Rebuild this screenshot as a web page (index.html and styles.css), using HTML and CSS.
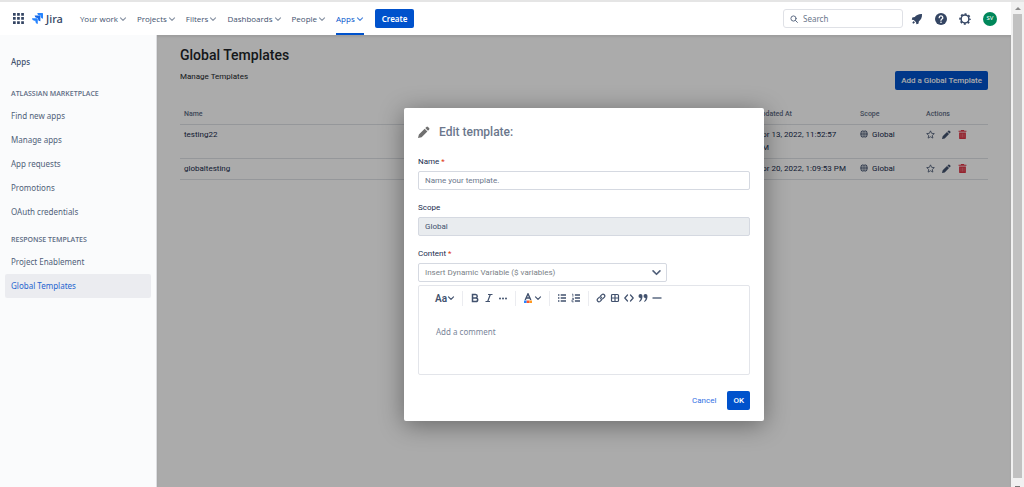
FILE: index.html
```html
<!DOCTYPE html>
<html lang="en">
<head>
<meta charset="utf-8">
<title>Global Templates - Jira</title>
<link rel="stylesheet" href="styles.css">
</head>
<body>
<svg class="defs" aria-hidden="true">
  <symbol id="chev" viewBox="0 0 8 8"><path d="M1.500 2.800 4 5.300l2.500-2.500" fill="none" stroke="currentColor" stroke-width="1.200" stroke-linecap="round" stroke-linejoin="round"/></symbol>
  <symbol id="pencil" viewBox="0 0 16 16"><path fill="currentColor" d="M11.200 1.300a1.500 1.500 0 0 1 2.100 0l1.500 1.500a1.500 1.500 0 0 1 0 2.100L13.300 6.400 9.700 2.800zM8.900 3.600l3.600 3.600-7.700 7.700L0 16l1.200-4.700z"/></symbol>
  <symbol id="star" viewBox="0 0 16 16"><path fill="none" stroke="currentColor" stroke-width="1.400" stroke-linejoin="round" d="m8 1.500 2 4.400 4.800.5-3.600 3.200 1 4.800L8 12l-4.200 2.400 1-4.800L1.200 6.400 6 5.900z"/></symbol>
  <symbol id="trash" viewBox="0 0 16 16"><path fill="currentColor" d="M5.500 0h5l.8 1.300H15v2H1v-2h3.700zM2 4.300h12V14.500a1.500 1.500 0 0 1-1.500 1.500h-9A1.500 1.500 0 0 1 2 14.500z"/><path d="M5.300 6.500v7M8 6.500v7M10.700 6.500v7" stroke="#fff" stroke-opacity=".45"/></symbol>
  <symbol id="globe" viewBox="0 0 16 16"><circle cx="8" cy="8" r="7.500" fill="currentColor"/><path d="M.5 5.500h15M.5 10.500h15M8 .5v15" stroke="#fff" stroke-width="1"/><ellipse cx="8" cy="8" rx="3.700" ry="7.500" fill="none" stroke="#fff"/></symbol>
</svg>
<div class="app">
  <div class="screen">
    <header class="topbar">
      <button class="icon-btn switcher" aria-label="App switcher"><svg viewBox="0 0 11 11" width="11" height="11" fill="#344563"><path d="M0 0h2.700v2.700H0zM4.100 0h2.700v2.700H4.100zM8.200 0h2.700v2.700H8.200zM0 4.100h2.700v2.700H0zM4.100 4.100h2.700v2.700H4.100zM8.200 4.100h2.700v2.700H8.200zM0 8.200h2.700v2.700H0zM4.100 8.200h2.700v2.700H4.100zM8.200 8.200h2.700v2.700H8.200z"/></svg></button>
      <a class="logo" href="#">
        <svg viewBox="0 0 24 24" width="11" height="11"><path fill="#2684ff" d="M23 0H11.500a5.200 5.200 0 0 0 5.200 5.200h2.100v2A5.200 5.200 0 0 0 24 12.400V1a1 1 0 0 0-1-1z"/><path fill="#1769e8" d="M17.300 5.700H5.800A5.200 5.200 0 0 0 11 10.900h2.100V13a5.200 5.200 0 0 0 5.200 5.200V6.700a1 1 0 0 0-1-1z"/><path fill="#2684ff" d="M11.600 11.500H0a5.200 5.200 0 0 0 5.200 5.200h2.200v2a5.200 5.200 0 0 0 5.200 5.200V12.500a1 1 0 0 0-1-1z"/></svg>
        <span>Jira</span>
      </a>
      <nav class="nav">
        <a href="#">Your work<svg class="chev"><use href="#chev"/></svg></a>
        <a href="#">Projects<svg class="chev"><use href="#chev"/></svg></a>
        <a href="#">Filters<svg class="chev"><use href="#chev"/></svg></a>
        <a href="#">Dashboards<svg class="chev"><use href="#chev"/></svg></a>
        <a href="#">People<svg class="chev"><use href="#chev"/></svg></a>
        <a class="current" href="#">Apps<svg class="chev"><use href="#chev"/></svg></a>
      </nav>
      <button class="primary create">Create</button>
      <div class="tools">
        <label class="search">
          <svg viewBox="0 0 8 8" width="8" height="8" fill="none" stroke="#5e6c84" stroke-linecap="round"><circle cx="3.500" cy="3.500" r="2.600"/><path d="m5.500 5.500 1.900 1.900"/></svg>
          <input type="text" placeholder="Search" aria-label="Search">
        </label>
        <button class="icon-btn" aria-label="Notifications"><svg viewBox="0 0 12 12" width="12" height="12" fill="#344563"><path d="M11 1C7.500.8 5.200 2.200 3.800 4L1.300 4.600.8 6.700l2 .3L5 9.300l.4 2 2-.6.5-2.500C9.900 6.800 11.200 4.500 11 1zM2.600 8 4 9.400l-1.700 1.300-1-.9z"/></svg></button>
        <button class="icon-btn" aria-label="Help"><svg viewBox="0 0 12 12" width="12" height="12"><circle cx="6" cy="6" r="6" fill="#344563"/><path d="M4.200 4.700a1.800 1.700 0 1 1 2.500 1.500c-.5.300-.7.500-.7 1.100" fill="none" stroke="#fff" stroke-width="1.300" stroke-linecap="round"/><circle cx="6" cy="9.200" r=".8" fill="#fff"/></svg></button>
        <button class="icon-btn" aria-label="Settings"><svg viewBox="0 0 12 12" width="12" height="12" fill="none" stroke="#344563"><circle cx="6" cy="6" r="3.900" stroke-width="1.500"/><circle cx="6" cy="6" r="5" stroke-width="1.600" stroke-dasharray="1.960 1.960" stroke-dashoffset=".980"/></svg></button>
        <button class="avatar" aria-label="Profile">SV</button>
      </div>
    </header>
    <div class="body">
      <aside class="sidebar">
        <p class="side-title">Apps</p>
        <h2>Atlassian Marketplace</h2>
        <a href="#">Find new apps</a>
        <a href="#">Manage apps</a>
        <a href="#">App requests</a>
        <a href="#">Promotions</a>
        <a href="#">OAuth credentials</a>
        <h2>Response Templates</h2>
        <a href="#">Project Enablement</a>
        <a class="current" href="#">Global Templates</a>
      </aside>
      <main class="main">
        <h1>Global Templates</h1>
        <p class="subtitle">Manage Templates</p>
        <div class="actions-bar"><button class="primary add">Add a Global Template</button></div>
        <table class="list">
          <thead><tr><th>Name</th><th class="col-date">Updated At</th><th class="col-small">Scope</th><th class="col-small">Actions</th></tr></thead>
          <tbody>
            <tr><td>testing22</td><td>Apr 13, 2022, 11:52:57 PM</td><td><span class="scope"><svg><use href="#globe"/></svg>Global</span></td>
              <td><span class="row-actions"><button aria-label="Favourite"><svg><use href="#star"/></svg></button><button aria-label="Edit"><svg><use href="#pencil"/></svg></button><button class="danger" aria-label="Delete"><svg><use href="#trash"/></svg></button></span></td></tr>
            <tr><td>globaltesting</td><td>Apr 20, 2022, 1:09:53 PM</td><td><span class="scope"><svg><use href="#globe"/></svg>Global</span></td>
              <td><span class="row-actions"><button aria-label="Favourite"><svg><use href="#star"/></svg></button><button aria-label="Edit"><svg><use href="#pencil"/></svg></button><button class="danger" aria-label="Delete"><svg><use href="#trash"/></svg></button></span></td></tr>
          </tbody>
        </table>
        <div class="overlay">
          <form class="modal" role="dialog" aria-labelledby="dialog-title">
            <h2 class="modal-title" id="dialog-title"><svg><use href="#pencil"/></svg>Edit template:</h2>
            <div class="field">
              <label for="name">Name <span class="req">*</span></label>
              <input id="name" type="text" placeholder="Name your template.">
            </div>
            <div class="field">
              <label for="scope">Scope</label>
              <input id="scope" type="text" value="Global" disabled>
            </div>
            <div class="field">
              <label for="content">Content <span class="req">*</span></label>
              <div class="select">
                <select aria-label="Insert dynamic variable"><option>Insert Dynamic Variable ($ variables)</option></select>
                <svg class="select-chev"><use href="#chev"/></svg>
              </div>
              <div class="editor">
                <div class="toolbar">
                  <button type="button" class="aa" aria-label="Text styles">Aa<svg class="chev"><use href="#chev"/></svg></button>
                  <span class="sep"></span>
                  <button type="button" aria-label="Bold"><svg viewBox="0 0 10 10" fill="none" stroke="currentColor" stroke-width="1.500"><path d="M2.500 1.500h3a1.700 1.700 0 0 1 0 3.500h-3zM2.500 5h3.400a1.800 1.800 0 0 1 0 3.600H2.500z"/></svg></button>
                  <button type="button" aria-label="Italic"><svg viewBox="0 0 10 10" fill="none" stroke="currentColor" stroke-width="1.200"><path d="M4 1.500h4.500M1.500 8.500H6M6.300 1.500l-2.600 7"/></svg></button>
                  <button type="button" aria-label="More formatting"><svg viewBox="0 0 10 10" fill="currentColor"><circle cx="2" cy="5.500" r="1"/><circle cx="5" cy="5.500" r="1"/><circle cx="8" cy="5.500" r="1"/></svg></button>
                  <span class="sep"></span>
                  <button type="button" class="color" aria-label="Text color"><svg viewBox="0 0 10 10"><path d="M2.200 7 5 .8 7.800 7M3.300 5h3.400" fill="none" stroke="currentColor" stroke-width="1.400"/><path d="M1 7.500h2.700V10H1z" fill="#2684ff"/><path d="M3.700 7.500h2.600V10H3.700z" fill="#ff5630"/><path d="M6.300 7.500H9V10H6.300z" fill="#ff991f"/></svg><svg class="chev"><use href="#chev"/></svg></button>
                  <span class="sep"></span>
                  <button type="button" aria-label="Bullet list"><svg viewBox="0 0 10 10" stroke="currentColor" stroke-width="1.300"><path d="M1 2h1.400M1 5h1.400M1 8h1.400M3.700 2H9M3.700 5H9M3.700 8H9"/></svg></button>
                  <button type="button" aria-label="Numbered list"><svg viewBox="0 0 10 10" fill="none" stroke="currentColor"><path d="M3.900 2H9M3.900 5H9M3.900 8H9" stroke-width="1.300"/><path d="M1 1.200h.9v2.500M1 5.300h1.500v1.500H1v2h1.700" stroke-width=".8"/></svg></button>
                  <span class="sep"></span>
                  <button type="button" aria-label="Link"><svg viewBox="0 0 10 10" fill="none" stroke="currentColor" stroke-width="1.200" stroke-linecap="round"><path d="m4.600 2.900 1.300-1.300a1.780 1.780 0 0 1 2.500 2.500L6.900 5.600a1.700 1.700 0 0 1-2.500 0M5.400 7.100 4.100 8.400a1.780 1.780 0 0 1-2.500-2.500l1.500-1.500a1.700 1.700 0 0 1 2.500 0"/></svg></button>
                  <button type="button" aria-label="Table"><svg viewBox="0 0 10 10" fill="none" stroke="currentColor" stroke-width="1.200"><rect x="1.500" y="1.500" width="7" height="7" rx="1"/><path d="M5 1.500v7M1.500 5h7"/></svg></button>
                  <button type="button" aria-label="Code"><svg viewBox="0 0 10 10" fill="none" stroke="currentColor" stroke-width="1.200" stroke-linecap="round" stroke-linejoin="round"><path d="M3.500 2 .8 5l2.700 3M6.500 2l2.700 3-2.700 3"/></svg></button>
                  <button type="button" aria-label="Quote"><svg viewBox="0 0 10 10" fill="currentColor"><path d="M.5 3a2 2 0 0 1 4 0c0 3-1 5-3 6l-.4-.9c1-.7 1.500-1.700 1.500-3A2 2 0 0 1 .5 3zM5.500 3a2 2 0 0 1 4 0c0 3-1 5-3 6l-.4-.9c1-.7 1.500-1.700 1.500-3A2 2 0 0 1 5.500 3z"/></svg></button>
                  <button type="button" aria-label="Divider"><svg viewBox="0 0 10 10" stroke="currentColor" stroke-width="1.300"><path d="M.5 5h9"/></svg></button>
                </div>
                <textarea id="content" placeholder="Add a comment"></textarea>
              </div>
            </div>
            <div class="modal-foot">
              <button type="button" class="link">Cancel</button>
              <button type="button" class="primary ok">OK</button>
            </div>
          </form>
        </div>
      </main>
    </div>
  </div>
  <div class="scrollbar" aria-hidden="true">
    <svg viewBox="0 0 8 8" width="8" height="8"><path d="M1 6h6L4 3z" fill="#8b8b8b"/></svg>
    <div class="thumb"></div>
    <div class="scroll-end"></div>
  </div>
</div>
</body>
</html>
```
FILE: styles.css
```css
* { box-sizing: border-box; }
body { margin: 0; color: #172b4d; font: 8px/13px Roboto, sans-serif; }
h1, h2, p { margin: 0; }
a { color: inherit; text-decoration: none; }
button, input, select, textarea { font: inherit; color: inherit; margin: 0; }
button { display: inline-flex; align-items: center; justify-content: center; padding: 0; border: 0; background: none; cursor: pointer; }
svg { flex: none; }
.defs { position: absolute; width: 0; height: 0; }
.chev { width: 8px; height: 8px; }

.app { display: flex; min-height: 100vh; border-top: 2px solid #e5e5e5; }
.screen { flex: 1; display: flex; flex-direction: column; min-width: 0; }

.topbar { display: flex; align-items: center; height: 33px; padding: 0 14px 0 12px; background: #fff; font-family: "Noto Sans", sans-serif; color: #42526e; }
.icon-btn { width: 12px; height: 12px; }
.logo { display: flex; align-items: center; gap: 3px; margin-left: 8px; font-size: 11px; font-weight: 500; color: #344563; }
.nav { display: flex; align-self: stretch; gap: 10px; margin-left: 17px; font-family: "Open Sans", sans-serif; font-weight: 500; }
.nav a { display: flex; align-items: center; gap: 1px; border-top: 2px solid transparent; border-bottom: 2px solid transparent; }
.nav .chev { color: #8993a4; }
.nav .current { color: #0052cc; border-bottom-color: #0052cc; }
.nav .current .chev { color: #4c86dc; }
.primary { background: #0052cc; color: #fff; border-radius: 2px; font-weight: 500; }
.create { height: 19px; padding: 0 7px; margin-left: 11px; font-weight: 600; }
.tools { display: flex; align-items: center; gap: 12px; margin-left: auto; }
.search { display: flex; align-items: center; gap: 5px; width: 120px; height: 19px; padding: 0 6px; margin-right: -4px; border: 1px solid #dfe1e6; border-radius: 3px; }
.search input { min-width: 0; flex: 1; padding: 0; border: 0; outline: 0; background: none; }
.search input::placeholder { color: #6b778c; }
.avatar { width: 14px; height: 14px; border-radius: 50%; background: #00875a; color: #fff; font-size: 6px; }

.body { flex: 1; display: flex; }
.sidebar { width: 157px; padding: 20px 5px; background: #fafbfc; border-right: 1px solid #dcdde0; font-family: "Noto Sans", sans-serif; color: #505f79; }
.side-title, .sidebar h2, .sidebar a { display: block; padding: 0 6px; }
.side-title { color: #42526e; font-weight: 500; }
.sidebar h2 { margin: 20px 0 4px; font-family: "Open Sans", sans-serif; font-size: 7px; line-height: 12px; font-weight: 600; text-transform: uppercase; color: #5e6c84; }
.sidebar a ~ h2 { margin-top: 10px; }
.sidebar a { line-height: 24px; border-radius: 2px; }
.sidebar .current { background: #ebecf0; color: #2564cf; }

.main { position: relative; flex: 1; min-width: 0; padding: 12px 23px; }
h1 { font-size: 14px; line-height: 16px; font-weight: 500; color: #212529; }
.subtitle { margin-top: 7px; line-height: 14px; color: #212529; }
.actions-bar { display: flex; justify-content: flex-end; margin: -13px 0 14px; }
.add { height: 19px; padding: 0 6px; }
.list { width: 100%; table-layout: fixed; border-collapse: collapse; }
.list th { height: 20px; padding: 2px 4px 0; text-align: left; font-size: 7px; font-weight: 500; color: #5e6c84; border-bottom: 1px solid #dfe1e6; }
.list td { padding: 3px 6px 4px 4px; vertical-align: top; border-bottom: 1px solid #dfe1e6; }
.col-date { width: 103px; }
.col-small { width: 66px; }
.scope, .row-actions { display: flex; align-items: center; height: 13px; }
.scope { gap: 4px; }
.scope svg { width: 8px; height: 8px; color: #42526e; }
.row-actions { gap: 7px; }
.row-actions svg { width: 9px; height: 9px; color: #42526e; }
.row-actions .danger svg { color: #de3545; }

.overlay { position: absolute; inset: 0; display: flex; justify-content: center; align-items: flex-start; padding-top: 73px; background: rgba(0, 0, 0, .33); box-shadow: inset 0 2px 2px rgba(0, 0, 0, .08); }
.modal { width: 360px; padding: 16px 14px 11px; background: #fff; border-radius: 2px; box-shadow: 0 4px 24px rgba(0, 0, 0, .4); }
.modal-title { display: flex; align-items: center; gap: 9px; font-size: 12px; line-height: 16px; font-weight: 500; color: #6b778c; }
.modal-title svg { width: 12px; height: 12px; color: #707070; }
.field { display: flex; flex-direction: column; gap: 3px; margin-top: 12px; }
.modal-title + .field { margin-top: 16px; }
.field label { line-height: 12px; }
.req { color: #de350b; }
.field > input, .select select { width: 100%; height: 19px; padding: 0 6px; border: 1px solid #d5d9e1; border-radius: 2px; background: #fff; }
.field > input::placeholder { color: #6b778c; }
.field > input:disabled { background: #e9ecef; color: #42526e; }
.select { position: relative; width: 75%; }
.select select { display: block; appearance: none; color: #7a7f87; }
.select-chev { position: absolute; right: 5px; top: 4px; width: 11px; height: 11px; color: #505f79; pointer-events: none; }
.editor { border: 1px solid #e3e5ea; border-radius: 2px; color: #42526e; }
.toolbar { display: flex; align-items: center; gap: 4px; height: 24px; padding: 0 16px; }
.toolbar svg { width: 10px; height: 10px; }
.toolbar .chev { width: 8px; height: 8px; }
.toolbar .aa { font-size: 10px; font-weight: 600; }
.toolbar .color { gap: 1px; }
.sep { width: 1px; height: 15px; margin: 0 3px; background: #ebecf0; }
.editor textarea { display: block; width: 100%; height: 64px; padding: 15px 17px; border: 0; outline: 0; resize: none; background: none; font: 8px/13px "Noto Sans", sans-serif; }
.editor textarea::placeholder { color: #7a869a; }
.modal-foot { display: flex; justify-content: flex-end; align-items: center; gap: 11px; margin-top: 16px; }
.link { color: #2f6fe4; }
.ok { height: 19px; padding: 0 6px; }

.scrollbar { display: flex; flex-direction: column; align-items: center; width: 13px; padding: 2px 1px 0; background: #f1f1f1; }
.thumb { flex: 1; align-self: stretch; margin: 2px 1px 0; background: #c1c1c1; }
.scroll-end { width: 5px; height: 9px; border-bottom: 1px solid #777; }
```
